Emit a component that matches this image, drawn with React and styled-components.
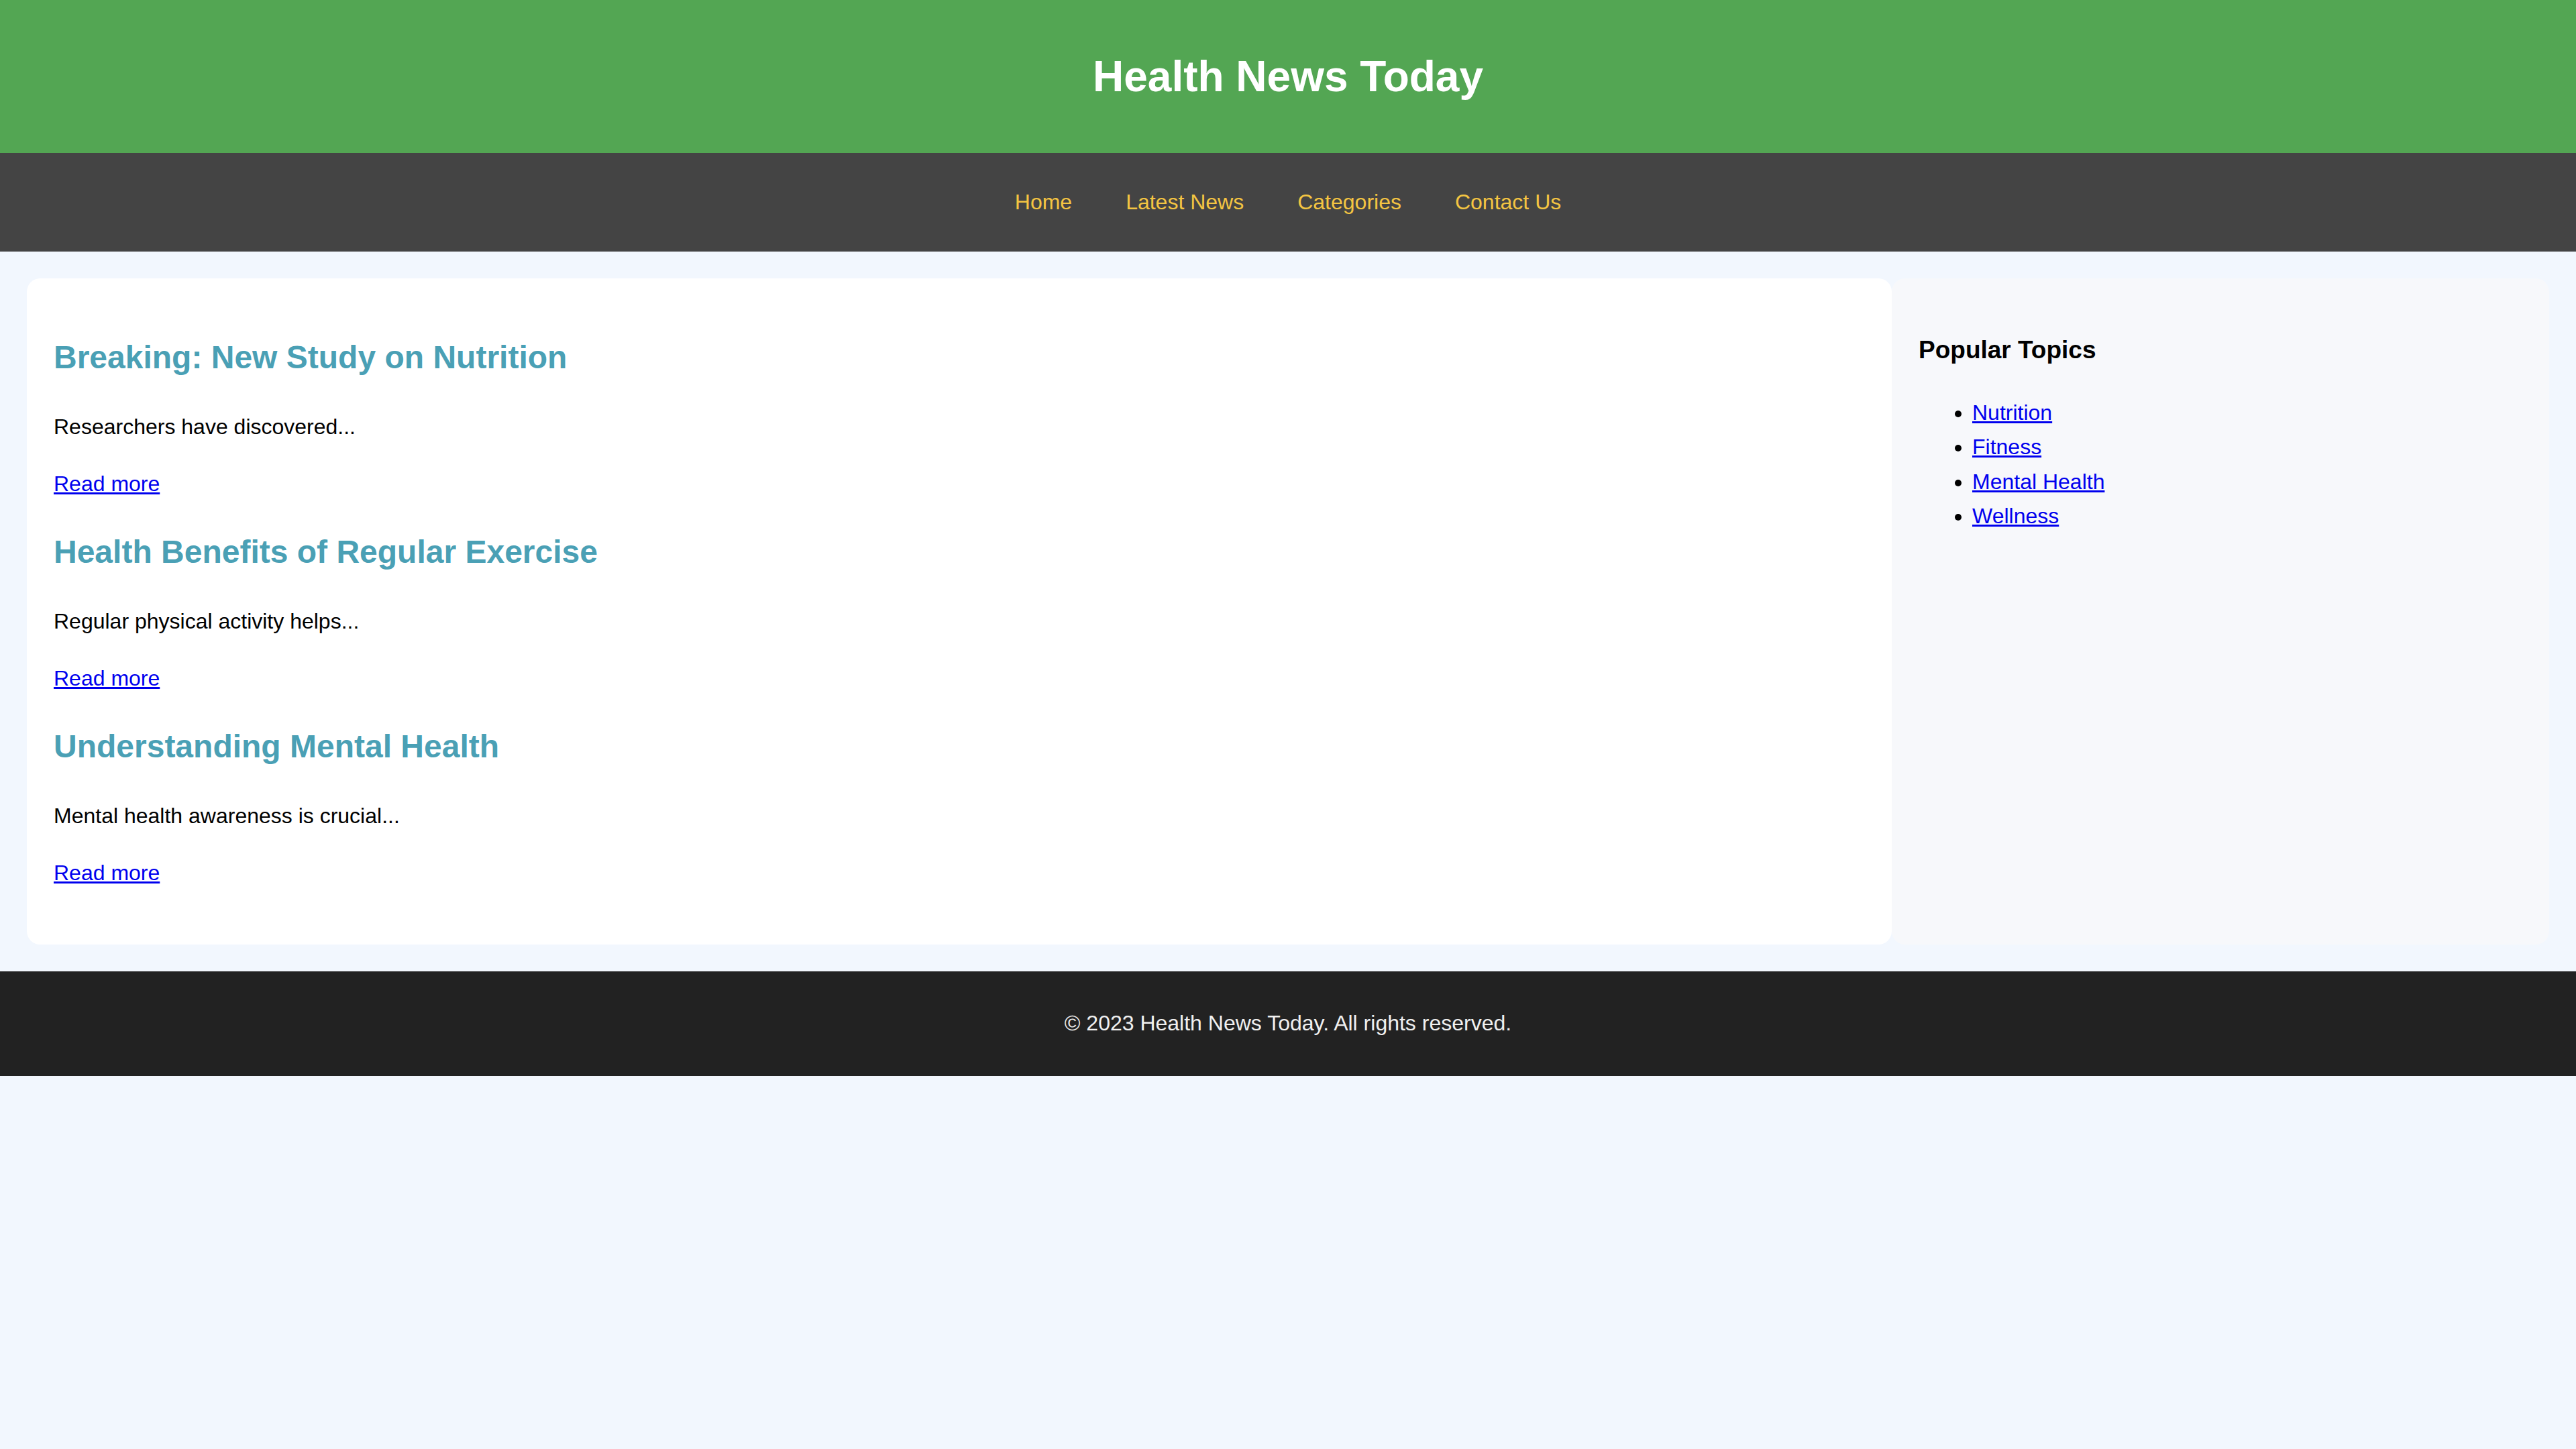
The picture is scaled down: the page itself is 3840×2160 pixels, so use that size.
import React from "react";
import styled, { createGlobalStyle } from "styled-components";

const articles = [
  { id: 1, title: "Breaking: New Study on Nutrition", summary: "Researchers have discovered..." },
  { id: 2, title: "Health Benefits of Regular Exercise", summary: "Regular physical activity helps..." },
  { id: 3, title: "Understanding Mental Health", summary: "Mental health awareness is crucial..." },
];

const topics = ["Nutrition", "Fitness", "Mental Health", "Wellness"];
const navLinks = ["Home", "Latest News", "Categories", "Contact Us"];

const GlobalStyle = createGlobalStyle`
  html, body {
    margin: 0;
    padding: 0;
    background: #f2f7fe;
    font-family: "Liberation Sans", Arial, sans-serif;
    font-size: 32px;
    line-height: 1.6;
    color: #000;
  }
`;

function App() {
  return (
    <>
      <GlobalStyle />
      <Header>
        <Title>Health News Today</Title>
      </Header>

      <Nav>
        {navLinks.map((link) => (
          <NavLink key={link} href="#">
            {link}
          </NavLink>
        ))}
      </Nav>

      <Main>
        <Content>
          {articles.map((article) => (
            <Article key={article.id}>
              <ArticleTitle>{article.title}</ArticleTitle>
              <Summary>{article.summary}</Summary>
              <ReadMore href="#">Read more</ReadMore>
            </Article>
          ))}
        </Content>

        <Sidebar>
          <SidebarTitle>Popular Topics</SidebarTitle>
          <TopicList>
            {topics.map((topic) => (
              <li key={topic}>
                <TopicLink href="#">{topic}</TopicLink>
              </li>
            ))}
          </TopicList>
        </Sidebar>
      </Main>

      <Footer>
        <FooterText>&copy; 2023 Health News Today. All rights reserved.</FooterText>
      </Footer>
    </>
  );
}

const Header = styled.header`
  height: 228px;
  background: #53a653;
  display: flex;
  align-items: center;
  justify-content: center;
`;

const Title = styled.h1`
  margin: 0;
  color: #fff;
  font-size: 64px;
  font-weight: 700;
  line-height: 1.2;
`;

const Nav = styled.nav`
  height: 147px;
  background: #444;
  display: flex;
  align-items: center;
  justify-content: center;
  gap: 80px;
`;

const NavLink = styled.a`
  color: #f4c542;
  font-size: 32px;
  text-decoration: none;
`;

const Main = styled.main`
  display: grid;
  grid-template-columns: 1fr 980px;
  padding: 40px;
`;

const Content = styled.section`
  background: #fff;
  border-radius: 20px;
  padding: 42px 40px 42px;
`;

const Article = styled.article`
  margin: 38px 0;
`;

const ArticleTitle = styled.h2`
  margin: 0;
  color: #4aa0b5;
  font-size: 48px;
  font-weight: 700;
`;

const Summary = styled.p`
  margin: 39px 0 0;
`;

const ReadMore = styled.a`
  display: block;
  width: fit-content;
  margin-top: 34px;
  color: #0000ee;
  text-decoration: underline;
`;

const Sidebar = styled.aside`
  background: #f7f8fb;
  border-radius: 20px;
  padding: 40px 40px;
`;

const SidebarTitle = styled.h3`
  margin: 37px 0 39px;
  font-size: 37px;
  font-weight: 700;
`;

const TopicList = styled.ul`
  margin: 0;
  padding-left: 80px;
`;

const TopicLink = styled.a`
  color: #0000ee;
  text-decoration: underline;
`;

const Footer = styled.footer`
  background: #222;
  height: 156px;
  display: flex;
  align-items: center;
  justify-content: center;
`;

const FooterText = styled.p`
  margin: 0;
  color: #f0f0f0;
`;

export default App;
